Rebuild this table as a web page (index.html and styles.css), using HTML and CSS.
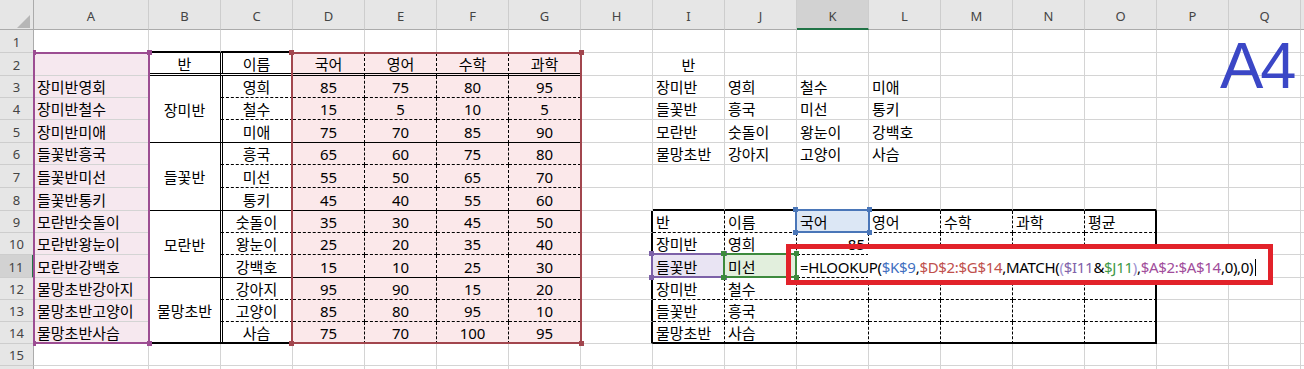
FILE: index.html
```html
<!DOCTYPE html>
<html lang="ko">
<head>
<meta charset="utf-8">
<title>Sheet</title>
<link rel="stylesheet" href="styles.css">
</head>
<body>
<div class="sheet">
  <div class="g">
    <!-- header -->
    <div class="corner"></div>
    <div class="ch">A</div><div class="ch">B</div><div class="ch">C</div><div class="ch">D</div><div class="ch">E</div><div class="ch">F</div><div class="ch">G</div><div class="ch">H</div><div class="ch">I</div><div class="ch">J</div><div class="ch sel">K</div><div class="ch">L</div><div class="ch">M</div><div class="ch">N</div><div class="ch">O</div><div class="ch">P</div><div class="ch">Q</div><div class="ch"></div>

    <!-- row 1 -->
    <div class="rh">1</div>
    <div></div><div class="bb2"></div><div class="bb2"></div><div></div><div></div><div></div><div></div><div></div><div></div><div></div><div></div><div></div><div></div><div></div><div></div><div></div><div></div><div></div>

    <!-- row 2 -->
    <div class="rh">2</div>
    <div class="pa"></div>
    <div class="ct brs bbd">반</div>
    <div class="ct dl brs bbd">이름</div>
    <div class="pd ct brx bbd">국어</div><div class="pd ct brx bbd">영어</div><div class="pd ct brx bbd">수학</div><div class="pd ct brs bbd">과학</div>
    <div></div><div class="ct">반</div><div></div><div></div><div></div><div></div><div></div><div></div><div></div><div></div><div></div>

    <!-- row 3 -->
    <div class="rh">3</div>
    <div class="pa">장미반영회</div>
    <div class="ct brs bbs span3">장미반</div>
    <div class="ct dl brs bbx">영희</div>
    <div class="pd ct brx bbx">85</div><div class="pd ct brx bbx">75</div><div class="pd ct brx bbx">80</div><div class="pd ct brs bbx">95</div>
    <div></div><div>장미반</div><div>영희</div><div>철수</div><div>미애</div><div></div><div></div><div></div><div></div><div></div><div></div>

    <!-- row 4 -->
    <div class="rh">4</div>
    <div class="pa">장미반철수</div>
    <div class="ct dl brs bbx">철수</div>
    <div class="pd ct brx bbx">15</div><div class="pd ct brx bbx">5</div><div class="pd ct brx bbx">10</div><div class="pd ct brs bbx">5</div>
    <div></div><div>들꽃반</div><div>흥국</div><div>미선</div><div>통키</div><div></div><div></div><div></div><div></div><div></div><div></div>

    <!-- row 5 -->
    <div class="rh">5</div>
    <div class="pa">장미반미애</div>
    <div class="ct dl brs bbs">미애</div>
    <div class="pd ct brx bbs">75</div><div class="pd ct brx bbs">70</div><div class="pd ct brx bbs">85</div><div class="pd ct brs bbs">90</div>
    <div></div><div>모란반</div><div>숫돌이</div><div>왕눈이</div><div>강백호</div><div></div><div></div><div></div><div></div><div></div><div></div>

    <!-- row 6 -->
    <div class="rh">6</div>
    <div class="pa">들꽃반흥국</div>
    <div class="ct brs bbs span3">들꽃반</div>
    <div class="ct dl brs bbx">흥국</div>
    <div class="pd ct brx bbx">65</div><div class="pd ct brx bbx">60</div><div class="pd ct brx bbx">75</div><div class="pd ct brs bbx">80</div>
    <div></div><div>물망초반</div><div>강아지</div><div>고양이</div><div>사슴</div><div></div><div></div><div></div><div></div><div></div><div></div>

    <!-- row 7 -->
    <div class="rh">7</div>
    <div class="pa">들꽃반미선</div>
    <div class="ct dl brs bbx">미선</div>
    <div class="pd ct brx bbx">55</div><div class="pd ct brx bbx">50</div><div class="pd ct brx bbx">65</div><div class="pd ct brs bbx">70</div>
    <div></div><div></div><div></div><div></div><div></div><div></div><div></div><div></div><div></div><div></div><div></div>

    <!-- row 8 -->
    <div class="rh">8</div>
    <div class="pa">들꽃반통키</div>
    <div class="ct dl brs bbs">통키</div>
    <div class="pd ct brx bbs">45</div><div class="pd ct brx bbs">40</div><div class="pd ct brx bbs">55</div><div class="pd ct brs bbs">60</div>
    <div></div><div class="bb2"></div><div class="bb2"></div><div class="bb2"></div><div class="bb2"></div><div class="bb2"></div><div class="bb2"></div><div class="bb2"></div><div></div><div></div><div></div>

    <!-- row 9 -->
    <div class="rh">9</div>
    <div class="pa">모란반숫돌이</div>
    <div class="ct brs bbs span3">모란반</div>
    <div class="ct dl brs bbx">숫돌이</div>
    <div class="pd ct brx bbx">35</div><div class="pd ct brx bbx">30</div><div class="pd ct brx bbx">45</div><div class="pd ct brs bbx">50</div>
    <div class="br2"></div>
    <div class="brx bbx">반</div><div class="brx bbx">이름</div><div class="brx bbx kb">국어</div><div class="brx bbx">영어</div><div class="brx bbx">수학</div><div class="brx bbx">과학</div><div class="br2 bbx">평균</div>
    <div></div><div></div><div></div>

    <!-- row 10 -->
    <div class="rh">10</div>
    <div class="pa">모란반왕눈이</div>
    <div class="ct dl brs bbx">왕눈이</div>
    <div class="pd ct brx bbx">25</div><div class="pd ct brx bbx">20</div><div class="pd ct brx bbx">35</div><div class="pd ct brs bbx">40</div>
    <div class="br2"></div>
    <div class="brx bbx">장미반</div><div class="brx bbx">영희</div><div class="brx bbx rt">85</div><div class="brx bbx"></div><div class="brx bbx"></div><div class="brx bbx"></div><div class="br2 bbx"></div>
    <div></div><div></div><div></div>

    <!-- row 11 -->
    <div class="rh sel">11</div>
    <div class="pa">모란반강백호</div>
    <div class="ct dl brs bbs">강백호</div>
    <div class="pd ct brx bbs">15</div><div class="pd ct brx bbs">10</div><div class="pd ct brx bbs">25</div><div class="pd ct brs bbs">30</div>
    <div class="br2"></div>
    <div class="brx bbx ip">들꽃반</div><div class="brx bbx jg">미선</div>
    <div class="brx bbx"><span class="fx">=HLOOKUP(<span class="f1">$K$9</span>,<span class="f2">$D$2:$G$14</span>,MATCH(<span class="fp">(</span><span class="f3">$I11</span>&amp;<span class="f4">$J11</span><span class="fp">)</span>,<span class="f5">$A$2:$A$14</span>,0),0)<span class="caret"></span></span></div>
    <div class="brx bbx"></div><div class="brx bbx"></div><div class="brx bbx"></div><div class="br2 bbx"></div>
    <div></div><div></div><div></div>

    <!-- row 12 -->
    <div class="rh">12</div>
    <div class="pa">물망초반강아지</div>
    <div class="ct brs bb2 span3">물망초반</div>
    <div class="ct dl brs bbx">강아지</div>
    <div class="pd ct brx bbx">95</div><div class="pd ct brx bbx">90</div><div class="pd ct brx bbx">15</div><div class="pd ct brs bbx">20</div>
    <div class="br2"></div>
    <div class="brx bbx">장미반</div><div class="brx bbx">철수</div><div class="brx bbx"></div><div class="brx bbx"></div><div class="brx bbx"></div><div class="brx bbx"></div><div class="br2 bbx"></div>
    <div></div><div></div><div></div>

    <!-- row 13 -->
    <div class="rh">13</div>
    <div class="pa">물망초반고양이</div>
    <div class="ct dl brs bbx">고양이</div>
    <div class="pd ct brx bbx">85</div><div class="pd ct brx bbx">80</div><div class="pd ct brx bbx">95</div><div class="pd ct brs bbx">10</div>
    <div class="br2"></div>
    <div class="brx bbx">들꽃반</div><div class="brx bbx">흥국</div><div class="brx bbx"></div><div class="brx bbx"></div><div class="brx bbx"></div><div class="brx bbx"></div><div class="br2 bbx"></div>
    <div></div><div></div><div></div>

    <!-- row 14 -->
    <div class="rh">14</div>
    <div class="pa">물망초반사슴</div>
    <div class="ct dl brs bb2">사슴</div>
    <div class="pd ct brx bb2">75</div><div class="pd ct brx bb2">70</div><div class="pd ct brx bb2">100</div><div class="pd ct brs bb2">95</div>
    <div class="br2"></div>
    <div class="brx bb2">물망초반</div><div class="brx bb2">사슴</div><div class="brx bb2"></div><div class="brx bb2"></div><div class="brx bb2"></div><div class="brx bb2"></div><div class="br2 bb2"></div>
    <div></div><div></div><div></div>

    <!-- row 15 -->
    <div class="rh">15</div>
    <div></div><div></div><div></div><div></div><div></div><div></div><div></div><div></div><div></div><div></div><div></div><div></div><div></div><div></div><div></div><div></div><div></div><div></div>

    <!-- row 16 (only its top edge is in view) -->
    <div class="rh"></div>
    <div></div><div></div><div></div><div></div><div></div><div></div><div></div><div></div><div></div><div></div><div></div><div></div><div></div><div></div><div></div><div></div><div></div><div></div>
  </div>

  <!-- reference range highlights (overlays) -->
  <div class="rng r-a"><i class="tl"></i><i class="tr"></i><i class="bl"></i><i class="br"></i></div>
  <div class="rng r-d"><i class="tl"></i><i class="tr"></i><i class="bl"></i><i class="br"></i></div>
  <div class="rng r-k"><i class="tl"></i><i class="tr"></i><i class="bl"></i><i class="br"></i></div>
  <div class="rng r-i"><i class="tl"></i><i class="tr"></i><i class="bl"></i><i class="br"></i></div>
  <div class="rng r-j"><i class="tl"></i><i class="tr"></i><i class="bl"></i><i class="br"></i></div>

  <div class="edit"></div>
  <div class="note"></div>

  <div class="a4">A4</div>
</div>
</body>
</html>
```

FILE: styles.css
```css
* { box-sizing: border-box; margin: 0; padding: 0; }
html, body { width: 1304px; height: 369px; overflow: hidden; background: #fff; }
body {
  font-family: "Noto Sans", "Noto Sans CJK KR", sans-serif;
  font-size: 15px;
  color: #000;
}

.sheet { position: relative; width: 1304px; height: 369px; overflow: hidden; }

.g {
  display: grid;
  grid-template-columns: 34px 115px repeat(17, 72px);
  grid-template-rows: 30px 23px 23px 22px 22px 23px 22px 23px 23px 22px 22px 23px 22px 22px 22px 22px 22px;
}

.g > div {
  border-right: 1px solid #d4d4d4;
  border-bottom: 1px solid #d4d4d4;
  display: flex;
  align-items: center;
  padding: 2px 3px 0 3px;
  line-height: 1;
  white-space: nowrap;
  min-width: 0;
}

/* headers */
.g > .corner {
  background: #e6e6e6;
  border-right-color: #ababab;
  border-bottom-color: #ababab;
  justify-content: flex-end;
  align-items: flex-end;
  padding: 0 3px 1px 0;
}
.corner::after {
  content: "";
  width: 0; height: 0;
  border-left: 13px solid transparent;
  border-bottom: 13px solid #b6b6b6;
}
.g > .ch {
  background: #e6e6e6;
  border-right-color: #cdcdcd;
  border-bottom-color: #ababab;
  justify-content: center;
  padding: 4px 0 0 0;
  font-size: 13px;
  color: #444;
}
.g > .rh {
  background: #e6e6e6;
  border-right-color: #ababab;
  border-bottom-color: #cdcdcd;
  justify-content: center;
  padding: 2px 0 0 0;
  font-size: 13px;
  color: #444;
}
.g > .ch.sel { background: #d2d2d2; border-bottom: 2px solid #217346; }
.g > .rh.sel { background: #d2d2d2; border-right: 2px solid #217346; }

/* alignment */
.ct { justify-content: center; }
.rt { justify-content: flex-end; }
.span3 { grid-row: span 3; }

/* fills */
.pa { background: #f6e8ef; }
.pd { background: #fbe8ea; }
.kb { background: #dce7f5; }
.ip { background: #e9e4f3; }
.jg { background: #e2efdd; }

/* borders */
.g > .bb2 { border-bottom: 2px solid #000; }
.g > .bbd { border-bottom: 3px double #000; }
.g > .bbs { border-bottom: 1px solid #000; }
.g > .bbx { border-bottom: 1px dashed #000; }
.g > .brs { border-right: 1px solid #000; }
.g > .brx { border-right: 1px dashed #000; }
.g > .br2 { border-right: 2px solid #000; }
.dl { box-shadow: inset 1px 0 0 #fff, inset 2px 0 0 #000; }

/* formula in edit mode */
.fx {
  position: relative;
  z-index: 3;
  flex-shrink: 0;
  letter-spacing: -0.3px;
  display: inline-flex;
  align-items: center;
}
.f1 { color: #3f6fbf; }
.f2 { color: #c0504d; }
.f3 { color: #7f62a9; }
.f4 { color: #3f9a48; }
.f5 { color: #a14d9b; }
.fp { color: #9c8fcf; }
.caret { display: inline-block; width: 1px; height: 17px; background: #000; margin-left: 2px; }

/* range highlight overlays */
.rng { position: absolute; border: 2px solid; z-index: 2; }
.rng i { position: absolute; width: 5px; height: 5px; background: currentColor; }
.rng .tl { left: -4px; top: -4px; }
.rng .tr { right: -4px; top: -4px; }
.rng .bl { left: -4px; bottom: -4px; }
.rng .br { right: -4px; bottom: -4px; }
.r-a { left: 33px; top: 52px; width: 117px; height: 292px; color: #9c4d92; }
.r-a .tl, .r-a .bl { left: -2px; width: 3px; }
.r-d { left: 291px; top: 52px; width: 291px; height: 292px; color: #a2464e; }
.r-k { left: 795px; top: 209px; width: 75px; height: 24px; color: #4a76b8; }
.r-i { left: 651px; top: 253px; width: 74px; height: 25px; color: #7c61a8; }
.r-j { left: 723px; top: 253px; width: 74px; height: 25px; color: #3d8a3d; }

.edit { position: absolute; left: 868px; top: 249px; width: 400px; height: 31px; background: #fff; z-index: 2; }
.note { position: absolute; left: 786px; top: 244px; width: 487px; height: 41px; border: 5px solid #e2222a; z-index: 4; }

.a4 {
  position: absolute;
  left: 1220px;
  top: 33px;
  font-family: "Liberation Sans", "Noto Sans", sans-serif;
  font-size: 65px;
  line-height: 1;
  letter-spacing: -3px;
  color: #3b47c6;
  z-index: 5;
}
```
